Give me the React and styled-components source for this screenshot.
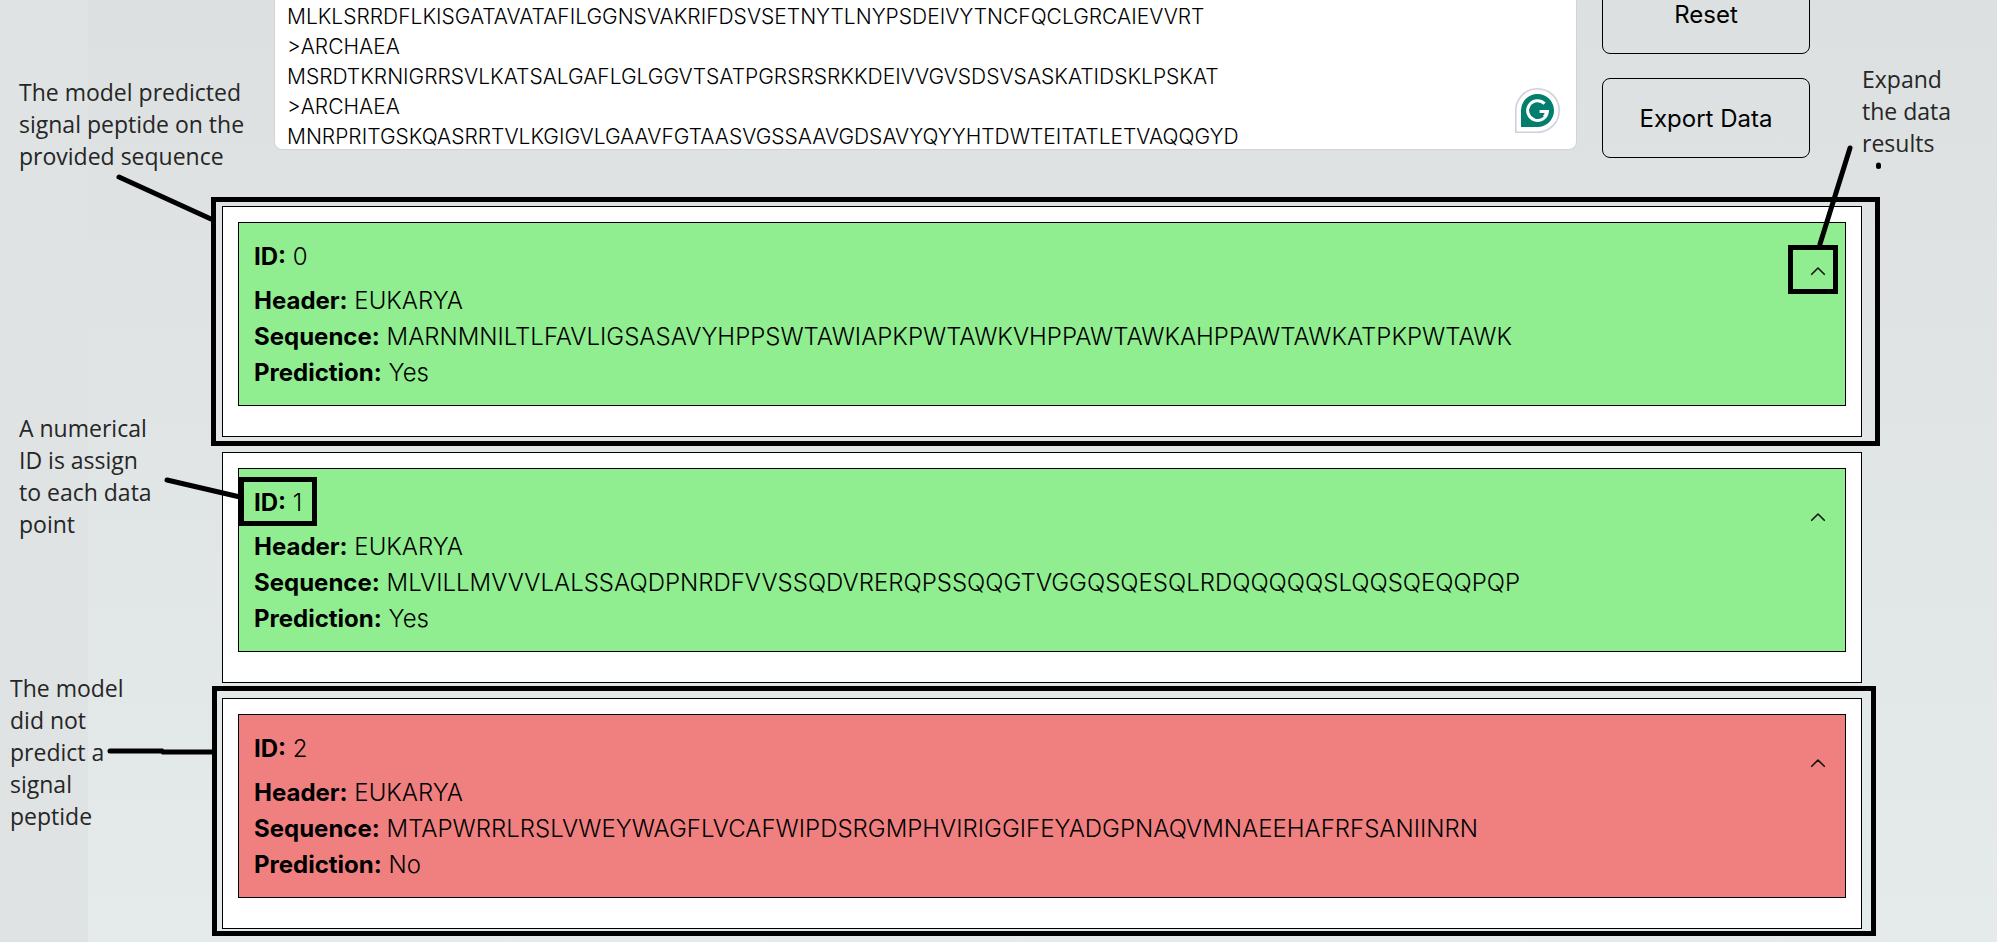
import React from "react";
import styled, { createGlobalStyle } from "styled-components";

const GlobalStyle = createGlobalStyle`
  *, *::before, *::after { box-sizing: border-box; }
  body {
    margin: 0;
    background: #e5e9ea;
    color: #000;
    font-family: Inter, "Liberation Sans", sans-serif;
  }
`;

const Page = styled.div`
  display: grid;
  grid-template-columns: 222px minmax(0, 1fr) 135px;
  min-height: 100vh;
  overflow: hidden;
  background:
    linear-gradient(#dfe3e4, #dfe3e4) 0 0 / 88px 100% no-repeat,
    linear-gradient(#dce0e1, #e5eaeb);
`;

const NotesColumn = styled.aside`
  display: flex;
  flex-direction: column;
  padding-top: ${(p) => p.$top}px;
`;

const Note = styled.p`
  margin: 0 0 ${(p) => p.$after || 0}px;
  padding-left: ${(p) => p.$indent || 0}px;
  font: 400 23px/32px "Open Sans", "Noto Sans", sans-serif;
  color: #262626;
  white-space: pre;
`;

const Main = styled.main`
  padding-bottom: 12px;
`;

const InputRow = styled.section`
  display: flex;
  align-items: flex-start;
  gap: 25px;
  padding: 0 52px;
  margin-bottom: 48px;
`;

const InputWrap = styled.div`
  position: relative;
  display: flex;
  flex: 1;
  min-width: 0;
`;

const SequenceInput = styled.textarea`
  width: 100%;
  height: 150px;
  padding: 2px 12px 0;
  border: 1px solid #ced4da;
  border-top: 0;
  border-radius: 0 0 8px 8px;
  background: #fff;
  color: #000;
  font: 300 21px/30px Inter, sans-serif;
  overflow: hidden;
  resize: none;
`;

const AssistantButton = styled.button`
  position: absolute;
  right: 17px;
  bottom: 17px;
  display: flex;
  padding: 0;
  border: 0;
  background: none;
`;

const Actions = styled.div`
  display: flex;
  flex-direction: column;
  gap: 24px;
  width: 208px;
  margin-top: -26px;
`;

const ActionButton = styled.button`
  height: 80px;
  padding: 2px 0 0;
  border: 1px solid #000;
  border-radius: 8px;
  background: transparent;
  color: #000;
  font: 400 24px/36px Inter, sans-serif;
`;

const Results = styled.section`
  display: flex;
  flex-direction: column;
  gap: 15px;
`;

const Card = styled.article`
  position: relative;
  padding: 15px 15px 30px;
  border: 1px solid #000;
  background: #fff;
`;

const Result = styled.div`
  position: relative;
  display: flex;
  align-items: flex-start;
  justify-content: space-between;
  padding: 16px 15px 14px;
  border: 1px solid #000;
  background: ${(p) => (p.$positive ? "#90ee90" : "#f08080")};
`;

const Details = styled.div`
  font-size: 24px;
  line-height: 36px;
  font-weight: 300;
`;

const Field = styled.p`
  margin: 0;
  white-space: nowrap;

  &:first-child { margin-bottom: 8px; }
  strong { font-weight: 700; }
`;

const ToggleButton = styled.button`
  display: flex;
  align-items: center;
  justify-content: center;
  width: 24px;
  height: 32px;
  margin-top: 16px;
  padding: 0;
  border: 0;
  background: none;
`;

const Frame = styled.div`
  position: absolute;
  border: 5px solid #000;
  pointer-events: none;
`;

const ResultFrame = styled(Frame)`
  inset: -10px -19px -10px -12px;
`;

const NegativeFrame = styled(Frame)`
  inset: -13px -15px -8px -11px;
`;

const ToggleFrame = styled(Frame)`
  top: 22px;
  right: 7px;
  width: 50px;
  height: 49px;
`;

const IdFrame = styled(Frame)`
  top: 8px;
  left: 0;
  width: 78px;
  height: 49px;
`;

const Pointer = styled.svg`
  position: absolute;
  top: ${(p) => p.$top}px;
  left: ${(p) => p.$left};
  right: ${(p) => p.$right};
  overflow: visible;
  pointer-events: none;
  stroke: #000;
  stroke-width: 5;
  stroke-linecap: round;
  fill: none;
`;

const sequences = [
  "MLKLSRRDFLKISGATAVATAFILGGNSVAKRIFDSVSETNYTLNYPSDEIVYTNCFQCLGRCAIEVVRT",
  ">ARCHAEA",
  "MSRDTKRNIGRRSVLKATSALGAFLGLGGVTSATPGRSRSRKKDEIVVGVSDSVSASKATIDSKLPSKAT",
  ">ARCHAEA",
  "MNRPRITGSKQASRRTVLKGIGVLGAAVFGTAASVGSSAAVGDSAVYQYYHTDWTEITATLETVAQQGYD",
].join("\n");

const results = [
  {
    id: 0,
    header: "EUKARYA",
    sequence: "MARNMNILTLFAVLIGSASAVYHPPSWTAWIAPKPWTAWKVHPPAWTAWKAHPPAWTAWKATPKPWTAWK",
    positive: true,
  },
  {
    id: 1,
    header: "EUKARYA",
    sequence: "MLVILLMVVVLALSSAQDPNRDFVVSSQDVRERQPSSQQGTVGGQSQESQLRDQQQQQSLQQSQEQQPQP",
    positive: true,
  },
  {
    id: 2,
    header: "EUKARYA",
    sequence: "MTAPWRRLRSLVWEYWAGFLVCAFWIPDSRGMPHVIRIGGIFEYADGPNAQVMNAEEHAFRFSANIINRN",
    positive: false,
  },
];

function ChevronUp() {
  return (
    <svg width="16" height="10" viewBox="0 0 16 10" fill="none" stroke="#111" strokeWidth="1.6" strokeLinecap="round" strokeLinejoin="round" aria-hidden="true">
      <path d="M1.7 8.3 8 2l6.3 6.3" />
    </svg>
  );
}

function AssistantLogo() {
  return (
    <svg width="45" height="45" viewBox="0 0 45 45" fill="none" aria-hidden="true">
      <path d="M.8 44.2V22.5A21.7 21.7 0 1 1 22.5 44.2Z" fill="#fff" stroke="#cfd1dc" strokeWidth="1.6" />
      <path d="M6 39V22.5A16.5 16.5 0 1 1 22.5 39Z" fill="#027e6f" />
      <path d="M29.6 15.6A9.9 9.9 0 1 0 32.4 23.6H24.6M32.4 23.6 29.4 28.6" stroke="#fff" strokeWidth="3" />
    </svg>
  );
}

function Annotations({ id }) {
  if (id === 0) {
    return (
      <>
        <ResultFrame />
        <Pointer $top={-32} $left="-106px" width="96" height="44">
          <path d="M2 2 94 44" />
        </Pointer>
        <Pointer $top={-61} $right="10px" width="32" height="100">
          <path d="M31 2 1 98" />
        </Pointer>
        <Pointer $top={-45} $right="-20px" width="5" height="6">
          <path d="M2.5 3V4.5" />
        </Pointer>
      </>
    );
  }
  if (id === 1) {
    return (
      <Pointer $top={25} $left="-58px" width="76" height="20">
        <path d="M2 2 75 19" />
      </Pointer>
    );
  }
  return (
    <>
      <NegativeFrame />
      <Pointer $top={50} $left="-115px" width="106" height="5">
        <path d="M2 2H54L55 3H105" />
      </Pointer>
    </>
  );
}

function ResultCard({ id, header, sequence, positive }) {
  return (
    <Card>
      <Result $positive={positive}>
        <Details>
          <Field><strong>ID:</strong> {id}</Field>
          <Field><strong>Header:</strong> {header}</Field>
          <Field><strong>Sequence:</strong> {sequence}</Field>
          <Field><strong>Prediction:</strong> {positive ? "Yes" : "No"}</Field>
        </Details>
        <ToggleButton type="button" aria-label={`Expand result ${id}`}>
          <ChevronUp />
        </ToggleButton>
        {id === 0 && <ToggleFrame />}
        {id === 1 && <IdFrame />}
      </Result>
      <Annotations id={id} />
    </Card>
  );
}

export default function App() {
  return (
    <>
      <GlobalStyle />
      <Page>
        <NotesColumn $top={76}>
          <Note $indent={19} $after={240}>{"The model predicted\nsignal peptide on the\nprovided sequence"}</Note>
          <Note $indent={19} $after={132}>{"A numerical\nID is assign\nto each data\npoint"}</Note>
          <Note $indent={10}>{"The model\ndid not\npredict a\nsignal\npeptide"}</Note>
        </NotesColumn>
        <Main>
          <InputRow>
            <InputWrap>
              <SequenceInput aria-label="Protein sequences" spellCheck={false} defaultValue={sequences} />
              <AssistantButton type="button" aria-label="Writing assistant">
                <AssistantLogo />
              </AssistantButton>
            </InputWrap>
            <Actions>
              <ActionButton type="button">Reset</ActionButton>
              <ActionButton type="button">Export Data</ActionButton>
            </Actions>
          </InputRow>
          <Results>
            {results.map((result) => (
              <ResultCard key={result.id} {...result} />
            ))}
          </Results>
        </Main>
        <NotesColumn $top={63}>
          <Note>{"Expand\nthe data\nresults"}</Note>
        </NotesColumn>
      </Page>
    </>
  );
}
